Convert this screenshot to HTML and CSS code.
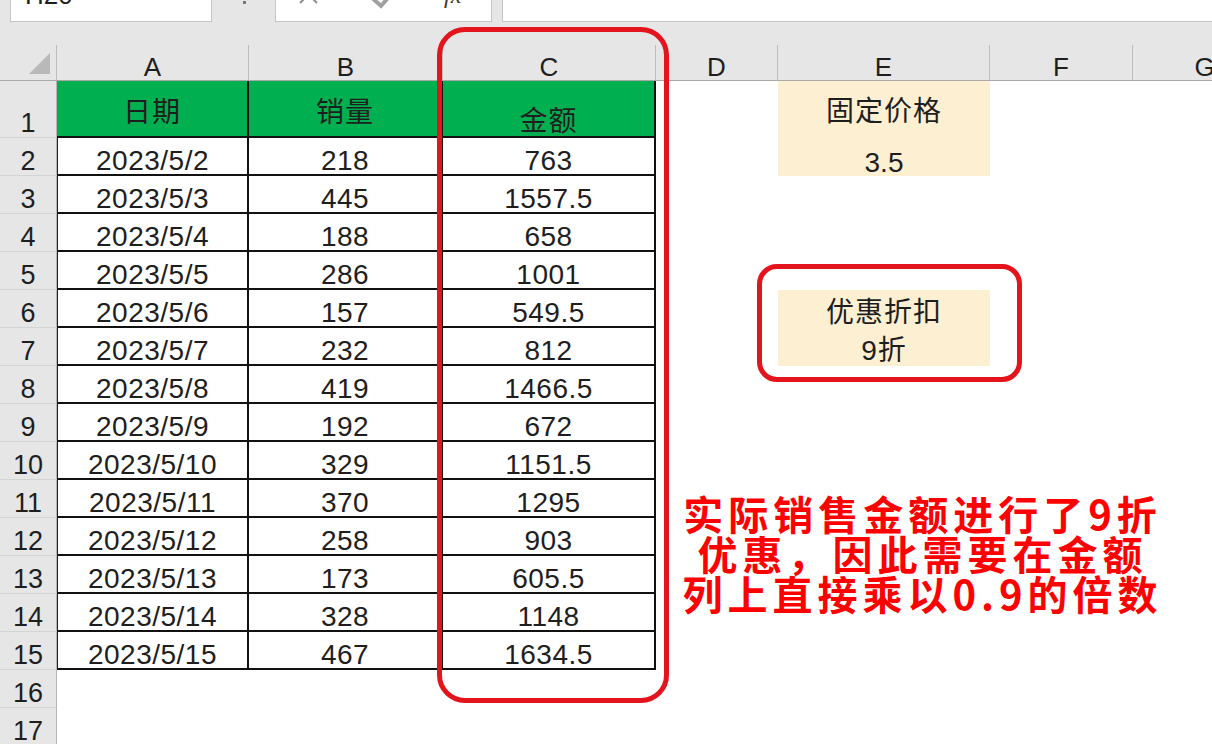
FILE: index.html
```html
<!DOCTYPE html>
<html lang="zh-CN">

<head>
    <meta charset="UTF-8">
    <meta name="viewport" content="width=device-width, initial-scale=1.0">
    <title>销售金额 - 9折</title>
    <link rel="stylesheet" href="styles.css">
</head>

<body>
    <div class="app">
        <div class="toolbar">
            <div class="name-box"><span>H20</span></div>
            <div class="dots"><i></i></div>
            <div class="fx-box">
                <svg width="217" height="22" viewBox="0 0 217 22">
                    <line x1="25" y1="-13" x2="42" y2="4" stroke="#8c8c8c" stroke-width="2" />
                    <line x1="42" y1="-13" x2="25" y2="4" stroke="#8c8c8c" stroke-width="2" />
                    <polyline points="94,-4 106,7 126,-16" fill="none" stroke="#a0a0a0" stroke-width="4" />
                    <text x="169" y="4" class="fx-text">fx</text>
                </svg>
            </div>
            <div class="formula-input"></div>
        </div>

        <div class="sheet">
            <div class="row colhead">
                <div class="corner">
                    <svg width="21" height="21" viewBox="0 0 21 21"><polygon points="21,0 21,21 0,21" fill="#b9b9b9" /></svg>
                </div>
                <div>A</div><div>B</div><div>C</div><div>D</div><div>E</div><div>F</div><div>G</div>
            </div>

            <div class="row r1">
                <div class="rh">1</div>
                <div class="t hd mid">日期</div>
                <div class="t hd mid">销量</div>
                <div class="t hd">金额</div>
                <div></div>
                <div class="tan mid cn">固定价格</div>
                <div></div><div></div>
            </div>
            <div class="row">
                <div class="rh">2</div>
                <div class="t l">2023/5/2</div><div class="t">218</div><div class="t">763</div>
                <div></div><div class="tan">3.5</div><div></div><div></div>
            </div>
            <div class="row">
                <div class="rh">3</div>
                <div class="t l">2023/5/3</div><div class="t">445</div><div class="t">1557.5</div>
                <div></div><div></div><div></div><div></div>
            </div>
            <div class="row">
                <div class="rh">4</div>
                <div class="t l">2023/5/4</div><div class="t">188</div><div class="t">658</div>
                <div></div><div></div><div></div><div></div>
            </div>
            <div class="row">
                <div class="rh">5</div>
                <div class="t l">2023/5/5</div><div class="t">286</div><div class="t">1001</div>
                <div></div><div></div><div></div><div></div>
            </div>
            <div class="row">
                <div class="rh">6</div>
                <div class="t l">2023/5/6</div><div class="t">157</div><div class="t">549.5</div>
                <div></div><div class="tan cn">优惠折扣</div><div></div><div></div>
            </div>
            <div class="row">
                <div class="rh">7</div>
                <div class="t l">2023/5/7</div><div class="t">232</div><div class="t">812</div>
                <div></div><div class="tan cn">9折</div><div></div><div></div>
            </div>
            <div class="row">
                <div class="rh">8</div>
                <div class="t l">2023/5/8</div><div class="t">419</div><div class="t">1466.5</div>
                <div></div><div></div><div></div><div></div>
            </div>
            <div class="row">
                <div class="rh">9</div>
                <div class="t l">2023/5/9</div><div class="t">192</div><div class="t">672</div>
                <div></div><div></div><div></div><div></div>
            </div>
            <div class="row">
                <div class="rh">10</div>
                <div class="t l">2023/5/10</div><div class="t">329</div><div class="t">1151.5</div>
                <div></div><div></div><div></div><div></div>
            </div>
            <div class="row">
                <div class="rh">11</div>
                <div class="t l">2023/5/11</div><div class="t">370</div><div class="t">1295</div>
                <div></div><div></div><div></div><div></div>
            </div>
            <div class="row">
                <div class="rh">12</div>
                <div class="t l">2023/5/12</div><div class="t">258</div><div class="t">903</div>
                <div></div><div></div><div></div><div></div>
            </div>
            <div class="row">
                <div class="rh">13</div>
                <div class="t l">2023/5/13</div><div class="t">173</div><div class="t">605.5</div>
                <div></div><div></div><div></div><div></div>
            </div>
            <div class="row">
                <div class="rh">14</div>
                <div class="t l">2023/5/14</div><div class="t">328</div><div class="t">1148</div>
                <div></div><div></div><div></div><div></div>
            </div>
            <div class="row">
                <div class="rh">15</div>
                <div class="t l">2023/5/15</div><div class="t">467</div><div class="t">1634.5</div>
                <div></div><div></div><div></div><div></div>
            </div>
            <div class="row">
                <div class="rh">16</div>
                <div></div><div></div><div></div><div></div><div></div><div></div><div></div>
            </div>
            <div class="row">
                <div class="rh">17</div>
                <div></div><div></div><div></div><div></div><div></div><div></div><div></div>
            </div>
        </div>

        <!-- red marks drawn over the sheet -->
        <div class="ring ring-c"></div>
        <div class="ring ring-e"></div>
        <div class="note">实际销售金额进行了9折<br>优惠，因此需要在金额<br>列上直接乘以0.9的倍数</div>
    </div>
</body>

</html>
```

FILE: styles.css
```css
* {
    box-sizing: border-box;
}

body {
    margin: 0;
    padding: 0;
    background: #fff;
    overflow: hidden;
    font-family: "Liberation Sans", "Noto Sans CJK SC", sans-serif;
    color: #1e1e1e;
}

.app {
    position: relative;
    width: 1212px;
    height: 744px;
    overflow: hidden;
    background: #fff;
}

/* formula bar */
.toolbar {
    height: 45px;
    background: #e6e6e6;
    display: flex;
    align-items: flex-start;
}

.name-box {
    margin-left: 10px;
    width: 202px;
    height: 22px;
    background: #fff;
    border: 1px solid #c4c4c4;
    border-top: 0;
    overflow: hidden;
    font-size: 26px;
    line-height: 1;
    padding-left: 14px;
}

.name-box span {
    display: block;
    margin-top: -18px;
}

.dots {
    width: 63px;
    height: 22px;
    position: relative;
}

.dots i {
    position: absolute;
    left: 31px;
    top: 1px;
    width: 3px;
    height: 3px;
    background: #777;
}

.fx-box {
    width: 217px;
    height: 22px;
    background: #fff;
    border: 1px solid #c4c4c4;
    border-top: 0;
    overflow: hidden;
}

.fx-box svg {
    display: block;
    margin: -1px 0 0 -1px;
}

.fx-text {
    font-family: "Liberation Serif", serif;
    font-style: italic;
    font-size: 24px;
    fill: #3a3a3a;
}

.formula-input {
    flex: 1;
    margin-left: 10px;
    height: 22px;
    background: #fff;
    border: 1px solid #c4c4c4;
    border-top: 0;
    border-right: 0;
}

/* sheet grid */
.sheet {
    margin-top: -45px;
    padding-top: 45px;
}

.row {
    display: grid;
    grid-template-columns: 57px 192px 194px 213px 122px 212px 143px 144px;
    height: 38px;
}

.row > div {
    display: flex;
    justify-content: center;
    align-items: flex-end;
    line-height: 26px;
}

.colhead {
    height: 36px;
    background: #e6e6e6;
    border-bottom: 1px solid #a9a9a9;
}

.colhead > div {
    border-right: 1px solid #bdbdbd;
    font-size: 26px;
    padding-bottom: 0;
}

.colhead > div:first-child + div {
    border-left: 0;
}

.colhead .corner {
    justify-content: flex-end;
    padding: 0 6px 6px 0;
    line-height: 0;
}

.r1 {
    height: 57px;
}

.rh {
    background: #e6e6e6;
    border-right: 1px solid #b5b5b5;
    border-bottom: 1px solid #d3d3d3;
    font-size: 27px;
    padding-bottom: 1px;
}

.t {
    border-right: 2px solid #111;
    border-bottom: 2px solid #111;
    font-size: 28px;
    letter-spacing: 0.5px;
}

.t.l {
    border-left: 1px solid #222;
}

.hd {
    background: #00b050;
    font-size: 28px;
    letter-spacing: 1px;
    padding-bottom: 1px;
}

.tan {
    background: #fcefd2;
    font-size: 28px;
}

.cn {
    letter-spacing: 1px;
    padding-bottom: 2px;
}

.row > .mid {
    align-items: center;
    padding-top: 10px;
}

.row > .tan.mid {
    padding-top: 6px;
}

/* red marks */
.ring {
    position: absolute;
    border: 5px solid #e3141c;
}

.ring-c {
    left: 437px;
    top: 27px;
    width: 232px;
    height: 676px;
    border-radius: 28px;
}

.ring-e {
    left: 757px;
    top: 264px;
    width: 265px;
    height: 118px;
    border-radius: 20px;
}

.note {
    position: absolute;
    left: 670px;
    top: 493px;
    width: 500px;
    padding-left: 5px;
    text-align: center;
    font-family: "Noto Sans CJK SC", sans-serif;
    font-weight: 700;
    font-size: 40px;
    line-height: 40px;
    letter-spacing: 5px;
    color: #ff0000;
}
```
